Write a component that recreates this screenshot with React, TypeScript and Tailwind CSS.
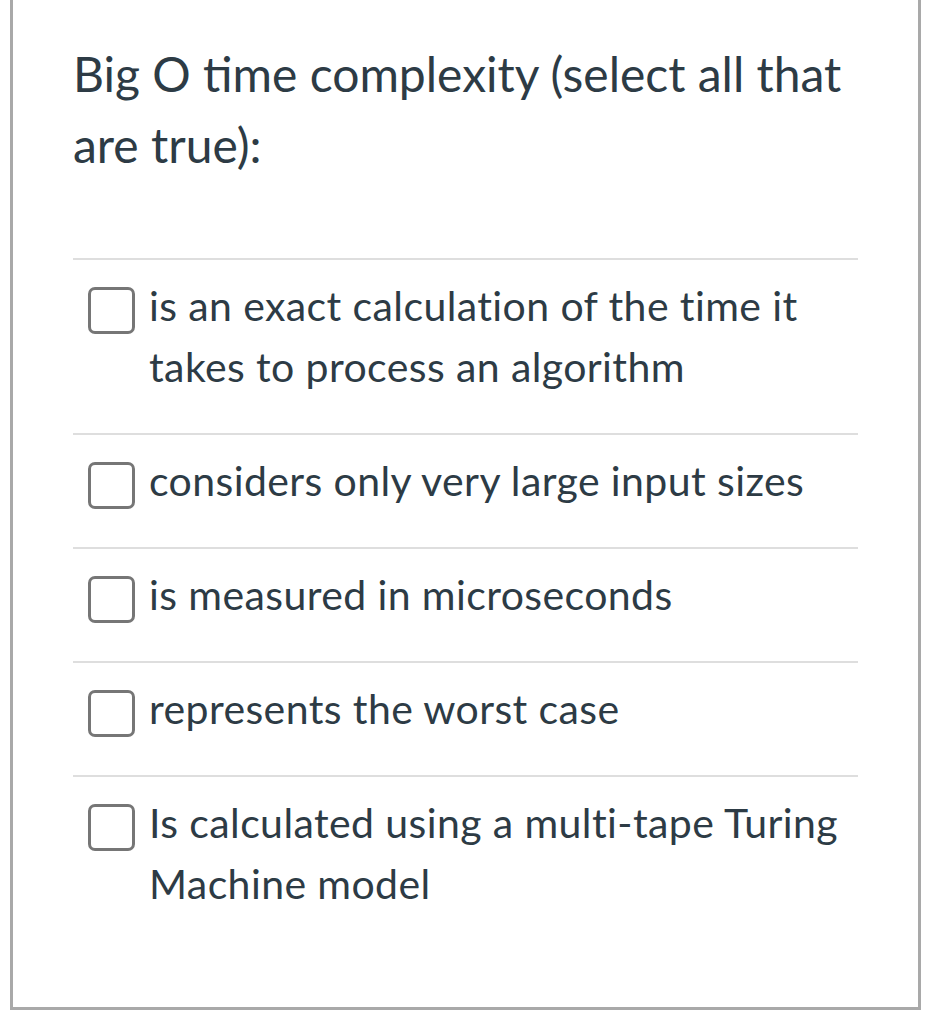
const options = [
  'is an exact calculation of the time it takes to process an algorithm',
  'considers only very large input sizes',
  'is measured in microseconds',
  'represents the worst case',
  'Is calculated using a multi-tape Turing Machine model',
];

function Checkbox() {
  return (
    <span className="mt-[12px] block h-[47px] w-[47px] shrink-0 rounded-[7px] border-[3px] border-[#767676] bg-white" />
  );
}

export default function App() {
  return (
    <div className="h-[1018px] w-[927px] overflow-hidden bg-white font-['Lato',sans-serif] text-[#2d3b45]">
      <div className="ml-[10px] h-[1010px] w-[911px] border-x-[3px] border-b-[3px] border-[#a9a9a9] px-[60px] pt-[38px]">
        <h1 className="text-[48px] leading-[71px] font-normal">
          Big O time complexity (select all that are true):
        </h1>

        <ul className="mt-[78px]">
          {options.map((text) => (
            <li
              key={text}
              className="flex border-t-2 border-[#dedede] pt-[15px] pb-[36px] pl-[15px]"
            >
              <Checkbox />
              <span className="ml-[14px] text-[41px] leading-[61px] tracking-[0.4px]">{text}</span>
            </li>
          ))}
        </ul>
      </div>
    </div>
  );
}
